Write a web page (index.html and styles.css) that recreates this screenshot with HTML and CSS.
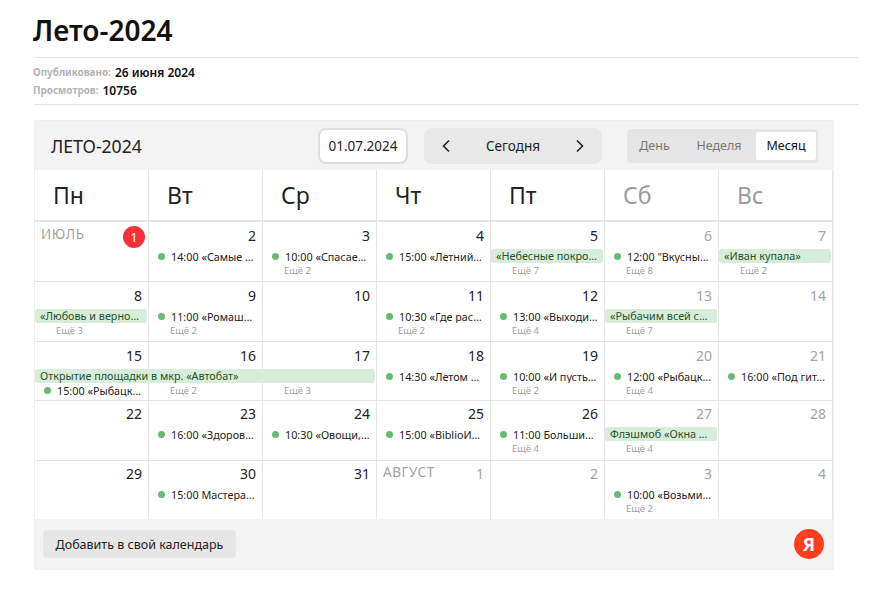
FILE: index.html
```html
<!DOCTYPE html>
<html lang="ru">
<head>
<meta charset="utf-8">
<title>Лето-2024</title>
<link rel="stylesheet" href="styles.css">
</head>
<body>
<main class="page">
  <h1 class="title">Лето-2024</h1>
  <div class="meta">
    <div class="meta-row"><span class="meta-label">Опубликовано:</span><span class="meta-value">26 июня 2024</span></div>
    <div class="meta-row"><span class="meta-label">Просмотров:</span><span class="meta-value">10756</span></div>
  </div>
  <section class="calendar">
    <header class="toolbar">
      <div class="cal-name">ЛЕТО-2024</div>
      <div class="date-input">01.07.2024</div>
      <div class="nav">
        <svg class="chev" viewBox="0 0 10 14" width="10" height="14"><path d="M8 1.5 2.5 7 8 12.5" fill="none" stroke="#222" stroke-width="1.6"/></svg>
        <span>Сегодня</span>
        <svg class="chev" viewBox="0 0 10 14" width="10" height="14"><path d="M2 1.5 7.5 7 2 12.5" fill="none" stroke="#222" stroke-width="1.6"/></svg>
      </div>
      <div class="views">
        <span class="view">День</span>
        <span class="view">Неделя</span>
        <span class="view active">Месяц</span>
      </div>
    </header>
    <div class="weekdays">
      <div class="wd">Пн</div><div class="wd">Вт</div><div class="wd">Ср</div><div class="wd">Чт</div><div class="wd">Пт</div><div class="wd off">Сб</div><div class="wd off">Вс</div>
    </div>
    <div class="grid">
      <div class="cell"><div class="head"><span class="month">ИЮЛЬ</span><span class="today">1</span></div></div>
      <div class="cell"><div class="head"><span class="d">2</span></div><div class="ev">14:00 «Самые …</div></div>
      <div class="cell"><div class="head"><span class="d">3</span></div><div class="ev">10:00 «Спасае…</div><div class="more">Ещё 2</div></div>
      <div class="cell"><div class="head"><span class="d">4</span></div><div class="ev">15:00 «Летний…</div></div>
      <div class="cell"><div class="head"><span class="d">5</span></div><div class="bar">«Небесные покро…</div><div class="more">Ещё 7</div></div>
      <div class="cell off"><div class="head"><span class="d">6</span></div><div class="ev">12:00 "Вкусны…</div><div class="more">Ещё 8</div></div>
      <div class="cell off"><div class="head"><span class="d">7</span></div><div class="bar">«Иван купала»</div><div class="more">Ещё 2</div></div>

      <div class="cell"><div class="head"><span class="d">8</span></div><div class="bar">«Любовь и верно…</div><div class="more">Ещё 3</div></div>
      <div class="cell"><div class="head"><span class="d">9</span></div><div class="ev">11:00 «Ромаш…</div><div class="more">Ещё 2</div></div>
      <div class="cell"><div class="head"><span class="d">10</span></div></div>
      <div class="cell"><div class="head"><span class="d">11</span></div><div class="ev">10:30 «Где рас…</div><div class="more">Ещё 2</div></div>
      <div class="cell"><div class="head"><span class="d">12</span></div><div class="ev">13:00 «Выходи…</div><div class="more">Ещё 4</div></div>
      <div class="cell off"><div class="head"><span class="d">13</span></div><div class="bar">«Рыбачим всей с…</div><div class="more">Ещё 7</div></div>
      <div class="cell off"><div class="head"><span class="d">14</span></div></div>

      <div class="cell"><div class="head"><span class="d">15</span></div><div class="bar span3">Открытие площадки в мкр. «Автобат»</div><div class="ev">15:00 «Рыбацк…</div></div>
      <div class="cell"><div class="head"><span class="d">16</span></div><div class="bar-gap"></div><div class="more">Ещё 2</div></div>
      <div class="cell"><div class="head"><span class="d">17</span></div><div class="bar-gap"></div><div class="more">Ещё 3</div></div>
      <div class="cell"><div class="head"><span class="d">18</span></div><div class="ev">14:30 «Летом …</div></div>
      <div class="cell"><div class="head"><span class="d">19</span></div><div class="ev">10:00 «И пусть…</div><div class="more">Ещё 2</div></div>
      <div class="cell off"><div class="head"><span class="d">20</span></div><div class="ev">12:00 «Рыбацк…</div><div class="more">Ещё 4</div></div>
      <div class="cell off"><div class="head"><span class="d">21</span></div><div class="ev">16:00 «Под гит…</div></div>

      <div class="cell"><div class="head"><span class="d">22</span></div></div>
      <div class="cell"><div class="head"><span class="d">23</span></div><div class="ev">16:00 «Здоров…</div></div>
      <div class="cell"><div class="head"><span class="d">24</span></div><div class="ev">10:30 «Овощи,…</div></div>
      <div class="cell"><div class="head"><span class="d">25</span></div><div class="ev">15:00 «BiblioИ…</div></div>
      <div class="cell"><div class="head"><span class="d">26</span></div><div class="ev">11:00 Больши…</div><div class="more">Ещё 4</div></div>
      <div class="cell off"><div class="head"><span class="d">27</span></div><div class="bar">Флэшмоб «Окна …</div><div class="more">Ещё 4</div></div>
      <div class="cell off"><div class="head"><span class="d">28</span></div></div>

      <div class="cell"><div class="head"><span class="d">29</span></div></div>
      <div class="cell"><div class="head"><span class="d">30</span></div><div class="ev">15:00 Мастера…</div></div>
      <div class="cell"><div class="head"><span class="d">31</span></div></div>
      <div class="cell next"><div class="head"><span class="month">АВГУСТ</span><span class="d">1</span></div></div>
      <div class="cell next"><div class="head"><span class="d">2</span></div></div>
      <div class="cell next"><div class="head"><span class="d">3</span></div><div class="ev">10:00 «Возьми…</div><div class="more">Ещё 2</div></div>
      <div class="cell next"><div class="head"><span class="d">4</span></div></div>
    </div>
    <footer class="footer">
      <button class="add" type="button">Добавить в свой календарь</button>
      <div class="ya">Я</div>
    </footer>
  </section>
</main>
</body>
</html>
```

FILE: styles.css
```css
* { box-sizing: border-box; }
html, body { margin: 0; background: #fff; }
body { font-family: "Noto Sans", "Open Sans", sans-serif; color: #222; }
.page { padding: 13px 19px 0 34px; }
.title { margin: 0 0 0 -1px; font-size: 28px; line-height: 34px; font-weight: 600; color: #111; height: 44px; }
.meta { border-top: 1px solid #e2e2e2; border-bottom: 1px solid #e2e2e2; padding: 5px 0; height: 48px; }
.meta-row { display: flex; align-items: center; gap: 4px; height: 18px; }
.meta-label { margin-left: -1px; font-size: 9.9px; font-weight: 700; color: #b3b3b3; }
.meta-value { font-size: 12px; font-weight: 600; color: #111; }
.calendar { width: 800px; margin-top: 15px; background: #f3f3f3; border: 1px solid #eee; }
.toolbar { height: 49px; display: flex; align-items: center; padding: 0 15px 0 16px; }
.cal-name { font-size: 17.6px; flex: 1; color: #222; }
.date-input { width: 90px; height: 36px; border: 2px solid #ddd; border-radius: 8px; background: #fff; font-size: 13.5px; display: flex; align-items: center; justify-content: center; }
.nav { width: 178px; height: 36px; margin-left: 16px; background: #e8e8e8; border-radius: 8px; font-size: 13.5px; display: flex; align-items: center; justify-content: space-between; padding: 0 17px; }
.views { margin-left: 25px; height: 34px; width: 191px; background: #e5e5e5; border-radius: 4px; display: flex; align-items: center; justify-content: flex-end; padding: 0 2px 0 0; font-size: 12.5px; }
.view { color: #777; height: 28px; display: flex; align-items: center; justify-content: center; }
.view:nth-child(1) { width: 55px; }
.view:nth-child(2) { width: 74px; }
.view.active { width: 60px; background: #fff; color: #111; border-radius: 2px; }
.weekdays { display: grid; grid-template-columns: repeat(7, 114px); background: #fff; border-bottom: 2px solid #e5e5e5; }
.wd { height: 50px; padding-left: 18px; font-size: 23px; line-height: 50px; border-right: 1px solid #e5e5e5; color: #222; }
.wd.off { color: #9b9b9b; }
.grid { display: grid; grid-template-columns: repeat(7, 114px); grid-template-rows: 60px 60px 59px 60px 58px; background: #fff; }
.cell { position: relative; border-right: 1px solid #e5e5e5; border-bottom: 1px solid #e5e5e5; min-width: 0; }
.cell:nth-child(n+29) { border-bottom: 0; }
.head { height: 23px; padding: 3px 6px 0; display: flex; justify-content: space-between; align-items: center; }
.cell:nth-child(n+22) .head { height: 22px; padding-top: 2px; }
.d { margin-left: auto; font-size: 14px; color: #222; }
.off .d, .next .d { color: #a3a3a3; }
.month { font-size: 13.5px; letter-spacing: 0.6px; color: #a3a3a3; margin-top: -3px; }
.today { width: 22px; height: 22px; border-radius: 50%; background: #f7303a; color: #fff; font-size: 13px; display: flex; align-items: center; justify-content: center; margin-top: 4px; margin-right: -3px; }
.ev { position: relative; margin-top: 5px; padding-left: 22px; height: 13px; font-size: 10.8px; line-height: 13px; color: #222; white-space: nowrap; overflow: hidden; }
.ev::before { content: ""; position: absolute; left: 9px; top: 3px; width: 7px; height: 7px; border-radius: 50%; background: #68bb72; }
.bar { margin: 4px 0 0; width: 112px; height: 14px; padding-left: 5px; border-radius: 3px; background: #d8edd9; font-size: 10.8px; line-height: 14px; color: #25502d; white-space: nowrap; overflow: hidden; }
.bar.span3 { position: relative; z-index: 1; width: 340px; }
.bar + .ev { margin-top: 1px; }
.bar-gap { height: 18px; }
.more { margin-top: 1px; padding-left: 21px; height: 14px; font-size: 9.5px; line-height: 14px; color: #a0a0a0; white-space: nowrap; }
.footer { height: 50px; display: flex; align-items: center; justify-content: space-between; padding: 0 9px 0 8px; }
.add { height: 28px; width: 193px; border: 0; border-radius: 4px; background: #e6e6e6; font: inherit; font-size: 12.5px; color: #222; padding: 0; }
.ya { width: 30px; height: 30px; border-radius: 50%; background: #fc3f1d; color: #fff; font-size: 18px; font-weight: 700; line-height: 30px; text-align: center; }
```
